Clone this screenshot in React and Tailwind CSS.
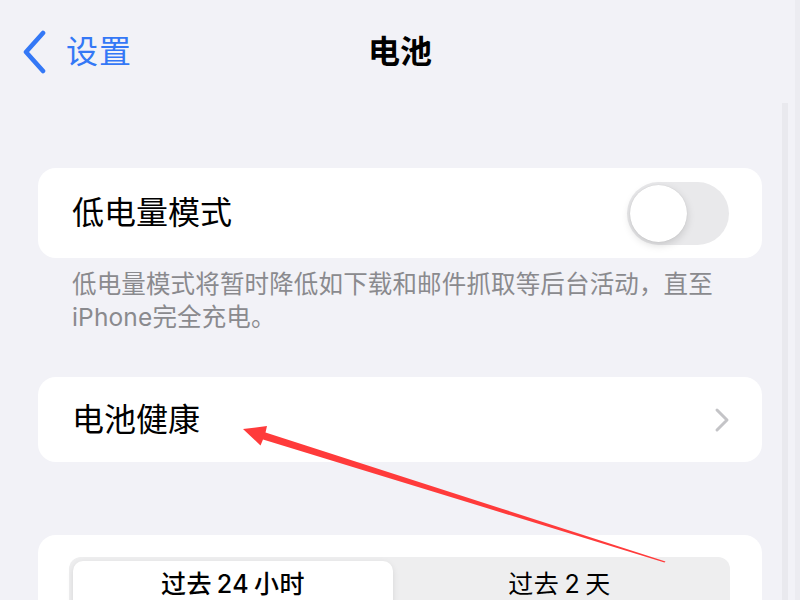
import React from 'react';

const font = "font-['Inter','Noto_Sans_CJK_SC',sans-serif]";

const Toggle = () => (
  <div className="w-[102px] h-[63px] rounded-full bg-[#e9e9eb] p-[3px] flex items-center">
    <div className="w-[57px] h-[57px] rounded-full bg-white shadow-[0_3px_8px_rgba(0,0,0,0.15),0_0_1px_rgba(0,0,0,0.15)]" />
  </div>
);

export default function App() {
  return (
    <div className={`relative w-[800px] h-[600px] overflow-hidden bg-[#f2f2f7] ${font}`}>
      {/* Nav bar */}
      <div className="relative mt-[20px] h-[64px] flex items-center">
        <div className="flex items-center pl-[22px]">
          <svg width="26" height="44" viewBox="0 0 26 44" className="shrink-0">
            <path d="M21 3 L4 22 L21 41" fill="none" stroke="#3478f6" strokeWidth="4.6" strokeLinecap="round" strokeLinejoin="round" />
          </svg>
          <span className="ml-[18px] text-[32px] leading-none text-[#3478f6] tracking-[1px]">设置</span>
        </div>
        <div className="absolute inset-0 flex items-center justify-center">
          <span className="text-[32px] leading-none font-semibold text-black">电池</span>
        </div>
      </div>

      {/* Low power mode */}
      <div className="mt-[84px] mx-[38px] h-[90px] rounded-[18px] bg-white flex items-center justify-between pl-[34px] pr-[33px]">
        <span className="text-[32px] leading-none text-black">低电量模式</span>
        <Toggle />
      </div>
      <p className="mt-[10px] px-[72px] text-[24.5px] leading-[33px] text-[#8a8a8e] tracking-[0.15px]">
        低电量模式将暂时降低如下载和邮件抓取等后台活动，直至
        <br />
        iPhone完全充电。
      </p>

      {/* Battery health */}
      <div className="mt-[43px] mx-[38px] h-[85px] rounded-[18px] bg-white flex items-center justify-between pl-[34px] pr-[32px]">
        <span className="text-[32px] leading-none text-black">电池健康</span>
        <svg width="16" height="26" viewBox="0 0 16 26">
          <path d="M3 3 L13 13 L3 23" fill="none" stroke="#c4c4c7" strokeWidth="3" strokeLinecap="round" strokeLinejoin="round" />
        </svg>
      </div>

      {/* Usage card */}
      <div className="mt-[73px] mx-[38px] h-[120px] rounded-[18px] bg-white pt-[22px] pl-[31px] pr-[32px]">
        <div className="h-[56px] rounded-[12px] bg-[#eeeeef] p-[4px] flex">
          <div className="w-[320px] h-[48px] rounded-[10px] bg-white shadow-[0_2px_6px_rgba(0,0,0,0.1)] flex items-center justify-center">
            <span className="text-[25px] font-medium text-black tracking-[0.5px]">过去{'\u2009'}24{'\u2009'}小时</span>
          </div>
          <div className="flex-1 h-[48px] flex items-center justify-center">
            <span className="text-[25px] text-black tracking-[0.5px]">过去{'\u2009'}2{'\u2009'}天</span>
          </div>
        </div>
      </div>

      {/* Scroll indicator */}
      <div className="absolute right-[12px] top-[103px] w-[6px] h-[497px] bg-[#e9e9ee]" />
      <div className="absolute right-0 top-0 w-[5px] h-[600px] bg-[#ececf1]" />

      {/* Annotation arrow */}
      <svg className="absolute inset-0 pointer-events-none" width="800" height="600" viewBox="0 0 800 600">
        <polygon
          points="243,429 267,426 265.5,432.5 665.5,561.5 664.5,562.5 263,439.5 260.5,445.5"
          fill="#ff3b3b"
        />
      </svg>
    </div>
  );
}
